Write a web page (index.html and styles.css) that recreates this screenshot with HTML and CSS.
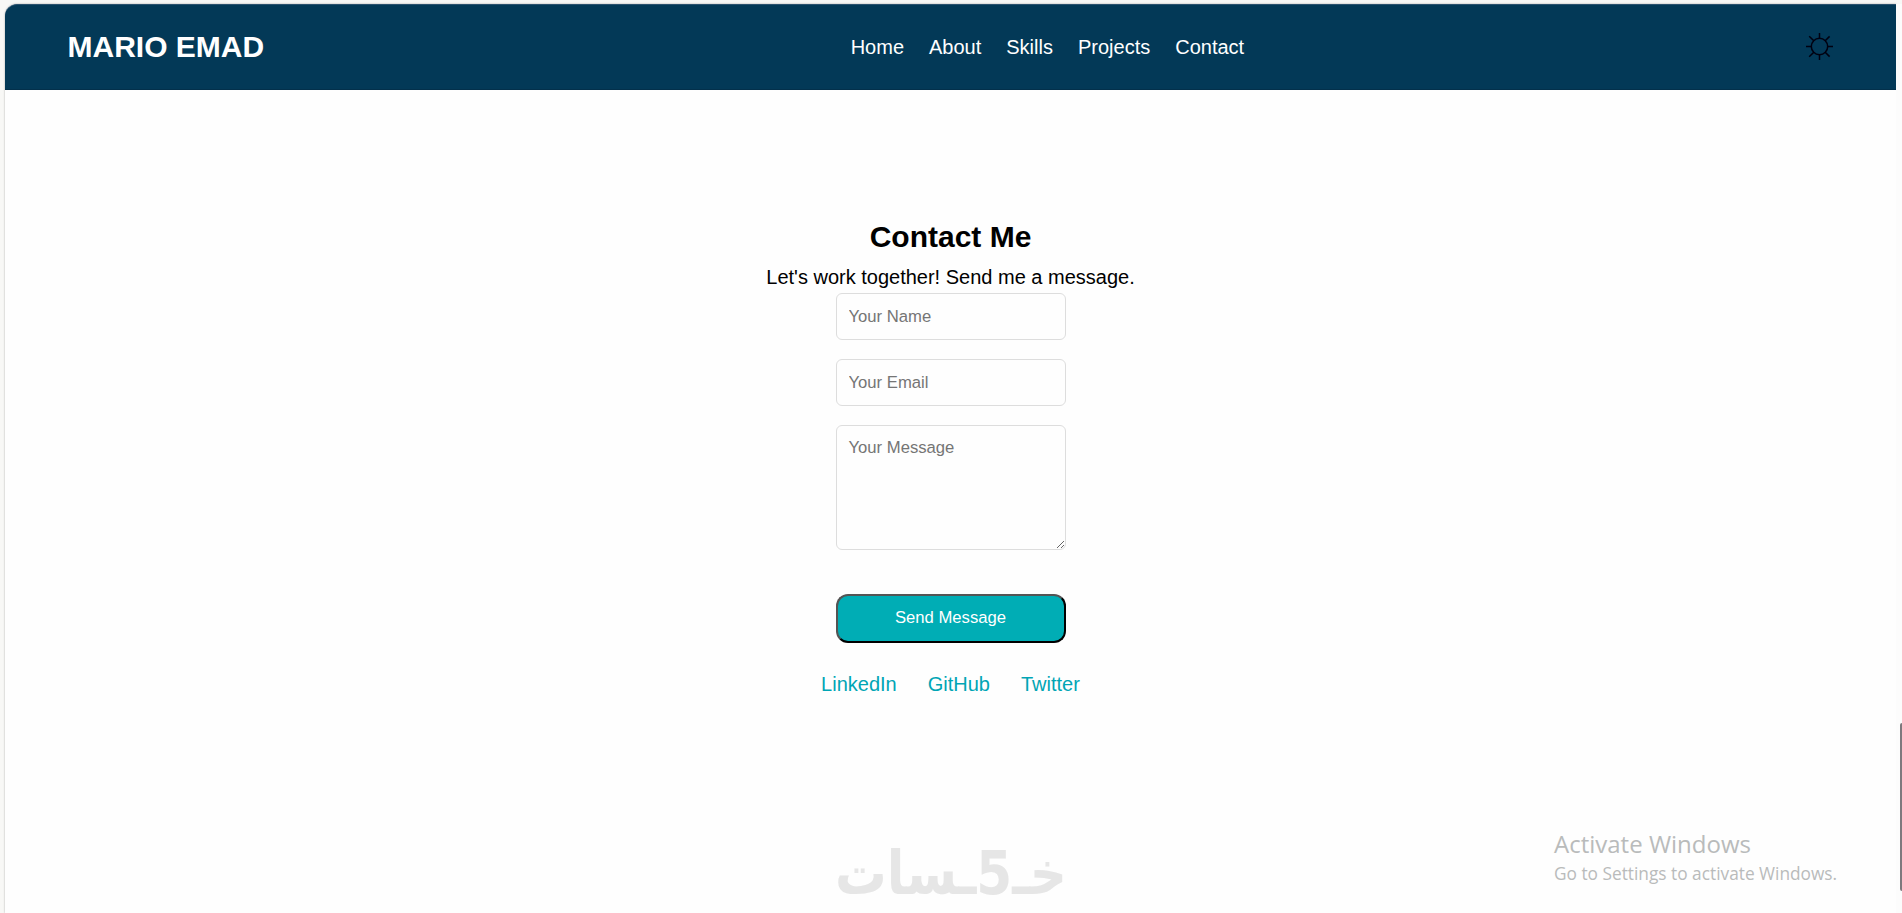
FILE: index.html
```html
<!DOCTYPE html>
<html lang="en">
<head>
    <meta charset="UTF-8">
    <title>Mario Emad</title>
    <link rel="stylesheet" href="styles.css">
</head>
<body>
    <div class="page">
        <header class="header">
            <h1 class="logo">MARIO EMAD</h1>
            <nav class="nav">
                <a href="#home">Home</a>
                <a href="#about">About</a>
                <a href="#skills">Skills</a>
                <a href="#projects">Projects</a>
                <a href="#contact">Contact</a>
            </nav>
            <svg class="theme-icon" viewBox="0 0 27 27">
                <circle cx="13.5" cy="13.5" r="8.2"/>
                <path d="M13.5 0v5.5M13.5 21.5V27M0 13.5h5.5M21.5 13.5H27M3.2 3.2l4.6 4.6M19.2 19.2l4.4 4.4M3.2 23.8l4.6-4.6M19.2 7.8l4.4-4.4"/>
            </svg>
        </header>

        <section class="contact" id="contact">
            <h2>Contact Me</h2>
            <p>Let's work together! Send me a message.</p>
            <form class="contact-form">
                <input type="text" placeholder="Your Name">
                <input type="email" placeholder="Your Email">
                <textarea placeholder="Your Message"></textarea>
                <button type="submit">Send Message</button>
            </form>
            <div class="social-links">
                <a href="#">LinkedIn</a>
                <a href="#">GitHub</a>
                <a href="#">Twitter</a>
            </div>
        </section>
    </div>

    <svg class="watermark" viewBox="0 0 228 46">
        <text x="-2" y="45" textLength="232" lengthAdjust="spacingAndGlyphs">خـ5ـسات</text>
    </svg>

    <div class="activate">
        <div class="activate-title">Activate Windows</div>
        <div class="activate-text">Go to Settings to activate Windows.</div>
    </div>

    <div class="scrollbar"><div class="thumb"></div></div>
</body>
</html>
```
FILE: styles.css
```css
* {
    margin: 0;
    padding: 0;
    box-sizing: border-box;
}

body {
    background-color: #f8f8f6;
    color: #000;
    font-family: Arial, "Liberation Sans", sans-serif;
    font-size: 20px;
    height: 100vh;
    overflow: hidden;
    padding: 4px 6px 0 5px;
}

.page {
    height: 100%;
    background-color: #fefefe;
    border-top-left-radius: 12px;
    box-shadow: 0 0 2px rgba(0, 0, 0, 0.35);
}

.header {
    display: flex;
    align-items: center;
    height: 86px;
    padding: 0 63.5px 1px 62.5px;
    background-color: #033957;
    border-top: 1px solid #2b526f;
    border-bottom: 1px solid #03304b;
    border-top-left-radius: 12px;
}

.logo {
    font-size: 30px;
    color: #fff;
}

.nav {
    display: flex;
    gap: 25px;
    margin-left: 586.5px;
    padding-top: 2px;
}

.nav a {
    color: #fff;
    text-decoration: none;
}

.theme-icon {
    width: 27px;
    height: 27px;
    margin-left: auto;
    fill: none;
    stroke: #000010;
    stroke-width: 1.5;
}

.contact {
    display: flex;
    flex-direction: column;
    align-items: center;
    padding-top: 129px;
}

.contact h2 {
    font-size: 30px;
    line-height: 36px;
}

.contact p {
    line-height: 24px;
    margin-top: 10px;
}

.contact-form {
    display: flex;
    flex-direction: column;
    width: 230px;
    margin-top: 4px;
}

.contact-form input,
.contact-form textarea {
    width: 100%;
    height: 47px;
    margin-bottom: 19px;
    padding: 12px;
    border: 1px solid #ddd;
    border-radius: 6px;
    background-color: #fefefe;
    font-family: inherit;
    font-size: 16.67px;
}

.contact-form textarea {
    height: 125px;
    margin-bottom: 44px;
}

.contact-form button {
    height: 49px;
    border: 2px outset #000;
    border-radius: 12px;
    background-color: #00adb5;
    color: #fff;
    font-family: inherit;
    font-size: 16.67px;
    padding-bottom: 1px;
}

.social-links {
    display: flex;
    gap: 31px;
    margin-top: 30px;
}

.social-links a {
    color: #00a5b5;
    text-decoration: none;
}

/* overlays */
.watermark {
    position: absolute;
    left: 837px;
    top: 849px;
    width: 228px;
    height: 46px;
    overflow: visible;
    fill: #e6e6e6;
    font-family: "DejaVu Sans", sans-serif;
    font-size: 60px;
    font-weight: bold;
}

.activate {
    position: absolute;
    left: 1554px;
    top: 827px;
    color: #b9bbbb;
    font-family: "Open Sans", "Noto Sans", sans-serif;
    white-space: nowrap;
}

.activate-title {
    font-size: 24px;
    line-height: 33px;
}

.activate-text {
    font-size: 17.3px;
    line-height: 27px;
}

.scrollbar {
    position: absolute;
    top: 4px;
    right: 0;
    bottom: 0;
    width: 6px;
    padding-top: 719px;
    background-color: #fcfcfc;
}

.thumb {
    width: 2px;
    height: 168px;
    margin-left: auto;
    border-radius: 2px 0 0 2px;
    background-color: #7d797d;
}
```
